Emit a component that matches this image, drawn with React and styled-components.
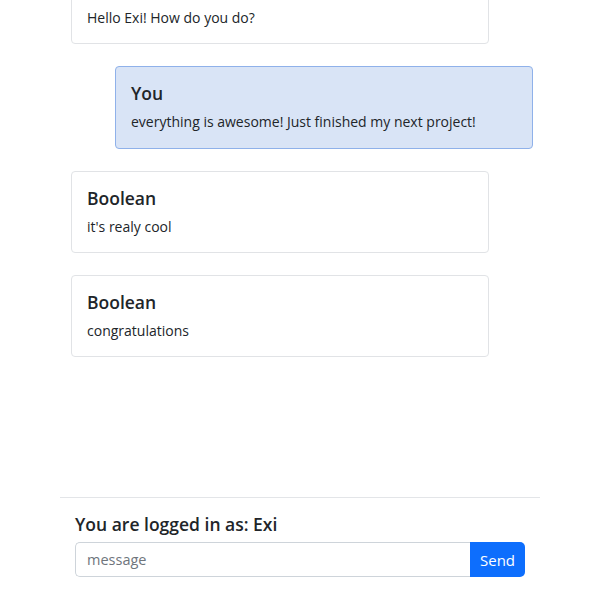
import React from 'react';
import styled, { createGlobalStyle } from 'styled-components';

const GlobalStyle = createGlobalStyle`
  html, body {
    margin: 0;
    padding: 0;
    background: #ffffff;
    font-family: "Open Sans", "Noto Sans", "Liberation Sans", sans-serif;
    color: #212529;
  }
  * { box-sizing: border-box; }
`;

const Page = styled.div`
  width: 480px;
  height: 100vh;
  margin: 0 auto;
  display: flex;
  flex-direction: column;
`;

const Messages = styled.div`
  height: 357px;
  display: flex;
  flex-direction: column;
  justify-content: flex-end;
  gap: 22px;
  overflow: hidden;
  padding: 0 7px 0 11px;
`;

const Card = styled.div`
  width: 418px;
  flex-shrink: 0;
  align-self: ${p => (p.$mine ? 'flex-end' : 'flex-start')};
  background: ${p => (p.$mine ? '#d9e4f6' : '#ffffff')};
  border: 1px solid ${p => (p.$mine ? '#8fb1ea' : '#e1e3e6')};
  border-radius: 4px;
  padding: 15px 15px ${p => (p.$mine ? '15px' : '14px')};
`;

const Author = styled.div`
  font-size: 17.5px;
  font-weight: 600;
  line-height: 22px;
  margin-bottom: 7px;
`;

const Text = styled.div`
  font-size: 14px;
  line-height: 22px;
`;

const Spacer = styled.div`
  flex: 1;
`;

const Footer = styled.div`
  border-top: 1px solid #e3e5e8;
  height: 103px;
  padding: 14px 15px 0;
`;

const LoggedIn = styled.div`
  font-size: 17.5px;
  font-weight: 600;
  line-height: 24px;
  margin-bottom: 6px;
`;

const InputGroup = styled.div`
  display: flex;
  height: 35px;
`;

const Input = styled.input`
  flex: 1;
  min-width: 0;
  border: 1px solid #ced4da;
  border-right: none;
  border-radius: 5px 0 0 5px;
  padding: 0 11px;
  font-family: inherit;
  font-size: 14.5px;
  color: #212529;
  outline: none;

  &::placeholder {
    color: #6f757c;
  }
`;

const SendButton = styled.button`
  width: 55px;
  border: none;
  border-radius: 0 5px 5px 0;
  background: #0d6efd;
  color: #ffffff;
  font-family: inherit;
  font-size: 15px;
  padding: 0;
  cursor: pointer;
`;

const messages = [
  { author: 'Boolean', text: 'Hello Exi! How do you do?' },
  { author: 'You', text: 'everything is awesome! Just finished my next project!', mine: true },
  { author: 'Boolean', text: "it's realy cool" },
  { author: 'Boolean', text: 'congratulations' },
];

const App = () => {
  return (
    <>
      <GlobalStyle />
      <Page>
        <Messages>
          {messages.map((m, i) => (
            <Card key={i} $mine={m.mine}>
              <Author>{m.author}</Author>
              <Text>{m.text}</Text>
            </Card>
          ))}
        </Messages>
        <Spacer />
        <Footer>
          <LoggedIn>You are logged in as: Exi</LoggedIn>
          <InputGroup>
            <Input placeholder="message" />
            <SendButton>Send</SendButton>
          </InputGroup>
        </Footer>
      </Page>
    </>
  );
};

export default App;
